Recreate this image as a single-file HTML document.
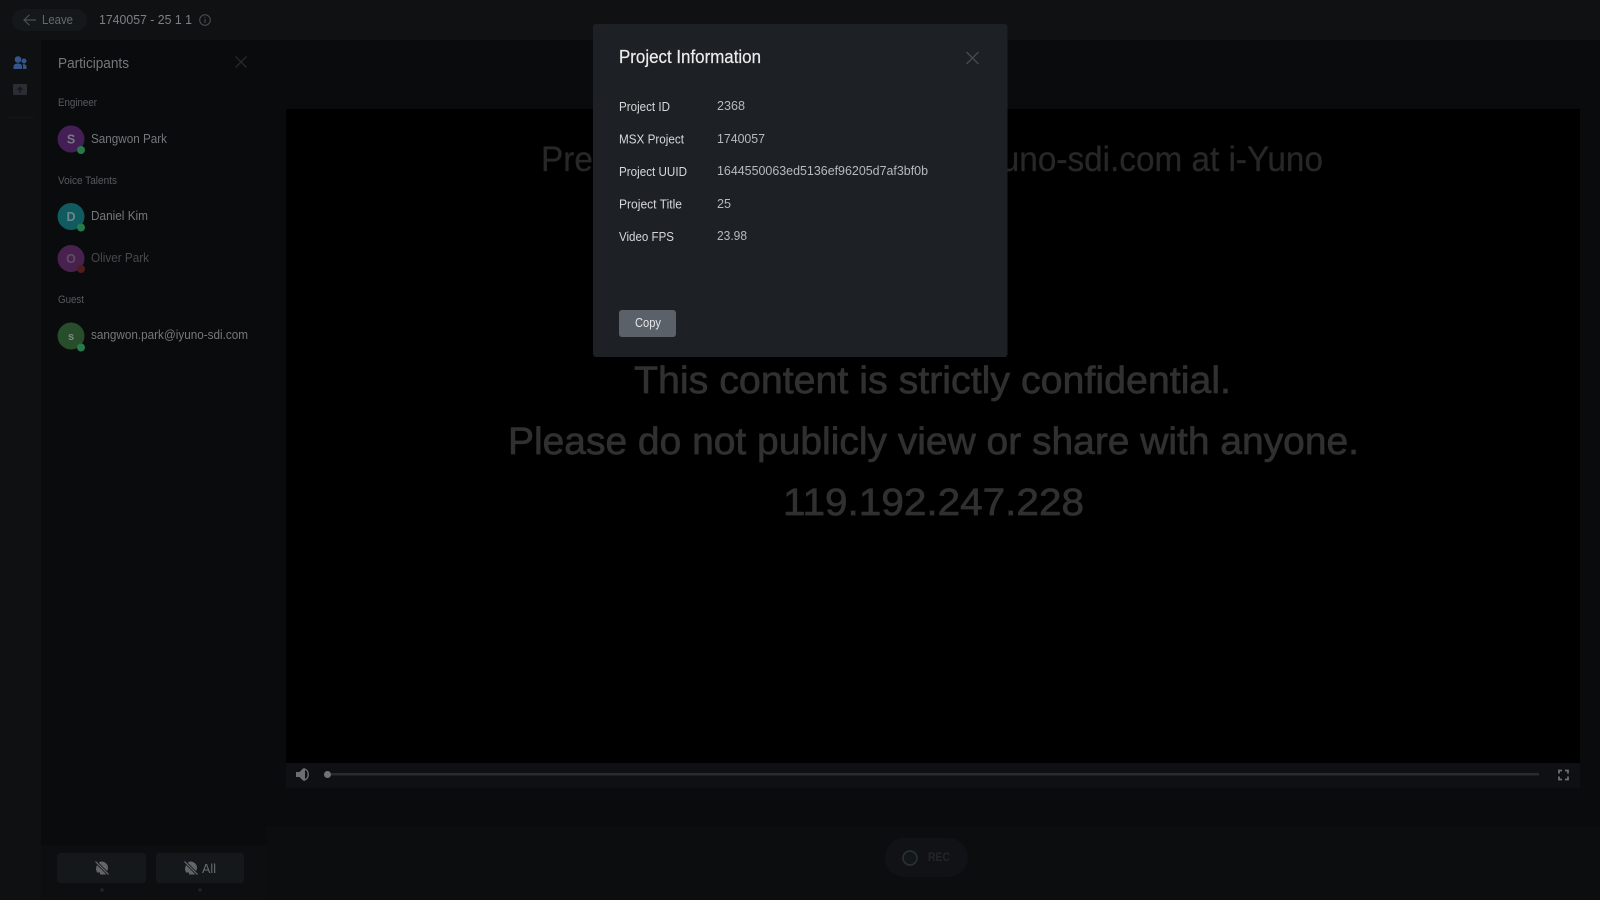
<!DOCTYPE html>
<html lang="en">
<head>
<meta charset="utf-8">
<title>Project Information</title>
<style>
html,body{margin:0;padding:0;width:1600px;height:900px;overflow:hidden;background:#000}
svg{display:block}
text{font-family:"Liberation Sans",sans-serif}
</style>
</head>
<body>
<svg xmlns="http://www.w3.org/2000/svg" width="1600" height="900" viewBox="0 0 1600 900">
<defs>
<g id="mute">
<path d="M-6 1.500C-6-3-3-6.500-.5-6.500C3-6.500 6-3.500 6-.5C6 2 4.800 3.500 3.800 5L3.800 6.500L-2 6.500L-2 4.500L-5 4.500Z" fill="#636669"/>
<path d="M-6.500-6.500L6.500 6.500" stroke="#1a1d20" stroke-width="3"/>
<path d="M-6.500-6.500L6.500 6.500" stroke="#6e7174" stroke-width="1"/>
</g>
</defs>

<rect width="1600" height="900" fill="#0a0b0d"/>
<rect width="1600" height="40" fill="#0f1113"/>
<rect y="40" width="41" height="860" fill="#0e1012"/>
<rect x="266" y="826" width="1334" height="74" fill="#0b0d0f"/>
<rect x="41" y="845" width="225" height="55" fill="#0c0e10"/>

<!-- Top bar -->
<rect x="12" y="9" width="75" height="22" rx="11" fill="#14181b"/>
<path d="M36 20H24.500M29.500 14.800L24 20L29.500 25.200" fill="none" stroke="#4a4e52" stroke-width="1.200"/>
<text x="42" y="24" font-size="13" fill="#67696c" textLength="31" lengthAdjust="spacingAndGlyphs">Leave</text>
<text x="99" y="24" font-size="13" fill="#7d8082" textLength="93" lengthAdjust="spacingAndGlyphs">1740057 - 25 1 1</text>
<circle cx="205" cy="20" r="5.300" fill="none" stroke="#4c4f52" stroke-width="1"/>
<path d="M205 19V23M205 16.800V17.800" stroke="#4c4f52" stroke-width="1"/>

<!-- Left rail -->
<circle cx="18" cy="59.500" r="3.300" fill="#34558c"/>
<circle cx="24" cy="61" r="2.500" fill="#34558c"/>
<path d="M13.500 69V66.500C13.500 64.500 15.500 63.500 18 63.500C20.500 63.500 22 64.500 22 66.500V69Z" fill="#34558c"/>
<path d="M23 69V66C23 65 22.700 64.500 22.500 64.200C24.800 64 26.500 65 26.500 66.500V69Z" fill="#34558c"/>
<rect x="13" y="84" width="14" height="11" rx="1.500" fill="#2a2e32"/>
<path d="M20 93V87.500M17.500 90L20 87.300L22.500 90" fill="none" stroke="#14161a" stroke-width="1.300"/>
<rect x="7" y="117" width="27" height="1" fill="#14161a"/>

<!-- Participants panel -->
<text x="58" y="68" font-size="14.500" fill="#75787a" textLength="71" lengthAdjust="spacingAndGlyphs">Participants</text>
<path d="M235.500 56.500L246.500 67.500M246.500 56.500L235.500 67.500" stroke="#26292c" stroke-width="1.300"/>

<text x="58" y="106" font-size="11" fill="#585b5e" textLength="39" lengthAdjust="spacingAndGlyphs">Engineer</text>
<circle cx="71" cy="139" r="13.500" fill="#431f56"/>
<text x="71" y="143.500" font-size="12.500" font-weight="bold" fill="#7d7782" text-anchor="middle">S</text>
<circle cx="81" cy="150" r="4" fill="#267a4b"/>
<text x="91" y="143" font-size="13" fill="#75787a" textLength="76" lengthAdjust="spacingAndGlyphs">Sangwon Park</text>

<text x="58" y="184" font-size="11" fill="#585b5e" textLength="59" lengthAdjust="spacingAndGlyphs">Voice Talents</text>
<circle cx="71" cy="216.500" r="13.500" fill="#105b60"/>
<text x="71" y="221" font-size="12.500" font-weight="bold" fill="#6e8689" text-anchor="middle">D</text>
<circle cx="81" cy="227.500" r="4" fill="#267a4b"/>
<text x="91" y="220" font-size="13" fill="#75787a" textLength="57" lengthAdjust="spacingAndGlyphs">Daniel Kim</text>

<circle cx="71" cy="258.500" r="13.500" fill="#48214e"/>
<text x="71" y="263" font-size="12.500" font-weight="bold" fill="#5e5063" text-anchor="middle">O</text>
<circle cx="81" cy="269" r="4" fill="#4e1d1d"/>
<text x="91" y="262" font-size="13" fill="#47494c" textLength="58" lengthAdjust="spacingAndGlyphs">Oliver Park</text>

<text x="58" y="303" font-size="11" fill="#585b5e" textLength="26" lengthAdjust="spacingAndGlyphs">Guest</text>
<circle cx="71" cy="336" r="13.500" fill="#284d2b"/>
<text x="71" y="340" font-size="11" font-weight="bold" fill="#7c8c7e" text-anchor="middle">s</text>
<circle cx="81" cy="347.500" r="4" fill="#267a4b"/>
<text x="91" y="339" font-size="13" fill="#75787a" textLength="157" lengthAdjust="spacingAndGlyphs">sangwon.park@iyuno-sdi.com</text>

<!-- Panel footer -->
<rect x="57" y="853" width="89" height="30" rx="3" fill="#15181b"/>
<rect x="156" y="853" width="88" height="30" rx="3" fill="#15181b"/>
<use href="#mute" x="102" y="868"/>
<use href="#mute" x="191" y="868"/>
<text x="202" y="873" font-size="12.500" fill="#696c70" textLength="14" lengthAdjust="spacingAndGlyphs">All</text>
<circle cx="102" cy="890" r="1.800" fill="#212427"/>
<circle cx="200" cy="890" r="1.800" fill="#212427"/>

<!-- Video -->
<rect x="286" y="109" width="1294" height="654" fill="#000"/>
<rect x="286" y="763" width="1294" height="25" fill="#0e1014"/>
<text x="541" y="171" font-size="35" fill="#272727" stroke="#272727" stroke-width=".3" textLength="782" lengthAdjust="spacingAndGlyphs">Prepared for sangwon.park@iyuno-sdi.com at i-Yuno</text>
<g fill="#303030" stroke="#303030" stroke-width=".7">
<text x="634" y="393" font-size="38" textLength="597" lengthAdjust="spacingAndGlyphs">This content is strictly confidential.</text>
<text x="508" y="454" font-size="38" textLength="851" lengthAdjust="spacingAndGlyphs">Please do not publicly view or share with anyone.</text>
<text x="783" y="515" font-size="38" textLength="301" lengthAdjust="spacingAndGlyphs">119.192.247.228</text>
</g>

<!-- Video controls -->
<path d="M296 772H299.500L303 768.500C304 767.800 305 768 305 769V780C305 781 304 781.200 303 780.500L299.500 777H296Z" fill="#6c6e70"/>
<path d="M304.500 769C309.500 770.500 309.500 778.500 304.500 780" fill="none" stroke="#6c6e70" stroke-width="1.400"/>
<circle cx="327.500" cy="774.500" r="3.500" fill="#717375"/>
<rect x="331" y="773" width="1208" height="2.500" fill="#262c33"/>
<path d="M1559 773.500V770.500H1562M1565 770.500H1568V773.500M1568 776.500V779.500H1565M1562 779.500H1559V776.500" fill="none" stroke="#6c6e70" stroke-width="1.800"/>

<!-- REC -->
<rect x="885" y="838" width="83" height="39" rx="19.500" fill="#101215"/>
<circle cx="910" cy="858" r="7" fill="#12171b" stroke="#2e3134" stroke-width="1.500"/>
<text x="928" y="861" font-size="12" font-weight="bold" fill="#232528" textLength="22" lengthAdjust="spacingAndGlyphs">REC</text>

<!-- Modal -->
<rect x="593" y="24" width="414.500" height="333" rx="3" fill="#1d2125"/>
<text x="619" y="63" font-size="18" fill="#ebecec" stroke="#ebecec" stroke-width=".2" textLength="142" lengthAdjust="spacingAndGlyphs">Project Information</text>
<path d="M966.500 52L978.500 64M978.500 52L966.500 64" stroke="#46494c" stroke-width="1.400"/>

<g font-size="13" fill="#d6d8da">
<text x="619" y="111" textLength="51" lengthAdjust="spacingAndGlyphs">Project ID</text>
<text x="619" y="143.500" textLength="65" lengthAdjust="spacingAndGlyphs">MSX Project</text>
<text x="619" y="176" textLength="68" lengthAdjust="spacingAndGlyphs">Project UUID</text>
<text x="619" y="208.500" textLength="63" lengthAdjust="spacingAndGlyphs">Project Title</text>
<text x="619" y="241" textLength="55" lengthAdjust="spacingAndGlyphs">Video FPS</text>
</g>

<g font-size="13" fill="#b7babd">
<text x="717" y="110" textLength="28" lengthAdjust="spacingAndGlyphs">2368</text>
<text x="717" y="143" textLength="48" lengthAdjust="spacingAndGlyphs">1740057</text>
<text x="717" y="175" textLength="211" lengthAdjust="spacingAndGlyphs">1644550063ed5136ef96205d7af3bf0b</text>
<text x="717" y="208" textLength="14" lengthAdjust="spacingAndGlyphs">25</text>
<text x="717" y="240" textLength="30" lengthAdjust="spacingAndGlyphs">23.98</text>
</g>

<rect x="619" y="310" width="57" height="27" rx="3" fill="#5a6169"/>
<text x="635" y="327" font-size="13" fill="#e6e7e8" textLength="26" lengthAdjust="spacingAndGlyphs">Copy</text>
</svg>
</body>
</html>
